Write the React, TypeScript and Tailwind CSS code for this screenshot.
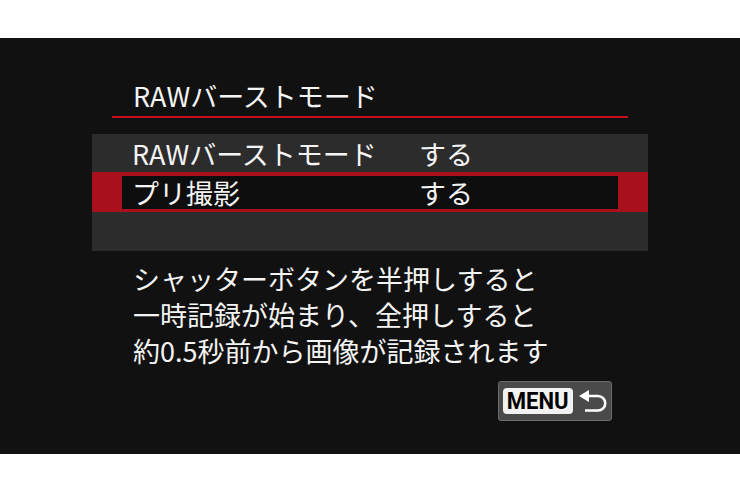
import React from 'react';

const jp = { fontFamily: '"Noto Sans CJK JP", "Noto Sans", sans-serif' };

function ReturnArrow() {
  return (
    <svg width="28" height="22" viewBox="0 0 28 22" className="block">
      <polygon points="0,6 10,0 10,12" fill="#ffffff" />
      <path d="M9 6 H19 A7.25 7.25 0 0 1 19 20.5 H6" fill="none" stroke="#ffffff" strokeWidth="2.6" />
    </svg>
  );
}

const rows = [
  { label: 'RAWバーストモード', value: 'する', selected: false },
  { label: 'プリ撮影', value: 'する', selected: true },
];

export default function App() {
  return (
    <div className="w-[740px] h-[493px] bg-white pt-[38px]" style={jp}>
      <div className="h-[416px] bg-[#111111] px-[92px] text-[#f4f4f4] flex flex-col">
        {/* Title */}
        <div className="mt-[40px] h-[36px] leading-[36px] pl-[41px] text-[27px]">RAWバーストモード</div>
        <div className="mx-[20px] mt-[2px] h-[2px] bg-[#c8101c]" />

        {/* Menu panel */}
        <div className="mt-[16px] bg-[#2c2c2c] flex flex-col">
          {rows.map((row) =>
            row.selected ? (
              <div key={row.label} className="h-[40px] bg-[#a8111c] pt-[4px] pb-[3px] px-[30px]">
                <div className="h-full bg-[#0e0e0e] grid grid-cols-[287px_1fr] items-center pl-[10px] text-[27px] leading-none">
                  <span>{row.label}</span>
                  <span>{row.value}</span>
                </div>
              </div>
            ) : (
              <div key={row.label} className="h-[38px] grid grid-cols-[287px_1fr] items-center pl-[40px] text-[27px] leading-none">
                <span>{row.label}</span>
                <span>{row.value}</span>
              </div>
            )
          )}
          <div className="h-[39px]" />
        </div>

        {/* Description */}
        <div className="mt-[10px] pl-[41px] text-[27px] leading-[36px]">
          <p>シャッターボタンを半押しすると</p>
          <p>一時記録が始まり、全押しすると</p>
          <p>約0.5秒前から画像が記録されます</p>
        </div>

        {/* MENU button */}
        <div className="mt-[12px] flex justify-end pr-[36px]">
          <div className="w-[114px] h-[40px] bg-[#4a4a4a] border border-[#6c6c6c] rounded-[3px] flex items-center pl-[4px] gap-[6px]">
            <div className="w-[70px] h-[26px] bg-[#f2f2f2] rounded-[4px] flex items-center justify-center">
              <span
                className="text-[24px] font-bold text-black leading-none scale-x-[0.92]"
                style={{ fontFamily: 'Roboto, "Liberation Sans", sans-serif' }}
              >
                MENU
              </span>
            </div>
            <ReturnArrow />
          </div>
        </div>
      </div>
    </div>
  );
}
